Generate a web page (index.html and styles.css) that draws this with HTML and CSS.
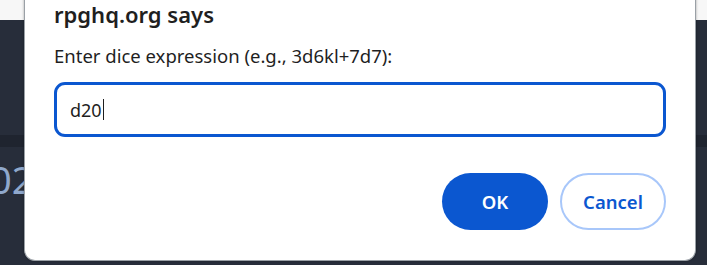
FILE: index.html
```html
<!DOCTYPE html>
<html>
<head>
<meta charset="utf-8">
<link rel="stylesheet" href="styles.css">
</head>
<body>
<div class="page">
  <div class="topbar"></div>
  <div class="content">
    <div class="upper"></div>
    <div class="band"></div>
    <div class="num">02</div>
  </div>
</div>
<div class="dialog">
  <h1 class="title">rpghq.org says</h1>
  <p class="msg">Enter dice expression (e.g., 3d6kl+7d7):</p>
  <div class="input"><span class="val">d20</span><span class="caret"></span></div>
  <div class="actions">
    <button class="btn ok">OK</button>
    <button class="btn cancel">Cancel</button>
  </div>
</div>
</body>
</html>
```
FILE: styles.css
```css
html, body {
  margin: 0;
  padding: 0;
  width: 707px;
  height: 265px;
  overflow: hidden;
  background: #272d3a;
  font-family: "Noto Sans", "Open Sans", sans-serif;
}
.page {
  display: flex;
  flex-direction: column;
}
.topbar {
  height: 20px;
  background: #f7f7f7;
}
.content {
  display: flex;
  flex-direction: column;
}
.upper {
  height: 115px;
}
.band {
  height: 12px;
  background: #1f242f;
}
.num {
  margin-top: 12px;
  font-size: 38px;
  line-height: 40px;
  color: #8fa8cc;
  margin-left: -10px;
}
.dialog {
  position: absolute;
  left: 24px;
  top: -12px;
  width: 672px;
  height: 273px;
  box-sizing: border-box;
  background: #fff;
  border: 1px solid #9aa0a6;
  border-top: none;
  border-radius: 0 0 11px 11px;
  padding: 11px 29px 0 29px;
  box-shadow: -1px 0 2px rgba(0,0,0,0.15), 1px 0 2px rgba(0,0,0,0.15);
}
.title {
  margin: 0;
  font-size: 22px;
  font-weight: 600;
  line-height: 30px;
  color: #1f1f1f;
}
.msg {
  margin: 15px 0 0 0;
  font-size: 18.5px;
  line-height: 24px;
  color: #1f1f1f;
}
.input {
  margin-top: 14px;
  height: 55px;
  box-sizing: border-box;
  border: 3px solid #0b57d0;
  border-radius: 11px;
  display: flex;
  align-items: center;
  padding-left: 13px;
  font-size: 18px;
  color: #1f1f1f;
}
.caret {
  display: inline-block;
  width: 1px;
  height: 21px;
  background: #1f1f1f;
  margin-left: 1px;
}
.actions {
  display: flex;
  justify-content: flex-end;
  gap: 12px;
  margin-top: 36px;
}
.btn {
  width: 106px;
  height: 57px;
  border-radius: 29px;
  font-family: inherit;
  font-size: 18.5px;
  font-weight: 600;
  box-sizing: border-box;
}
.ok {
  background: #0b57d0;
  color: #fff;
  border: none;
}
.cancel {
  background: #fff;
  color: #0b57d0;
  border: 2px solid #a8c7fa;
}
```
